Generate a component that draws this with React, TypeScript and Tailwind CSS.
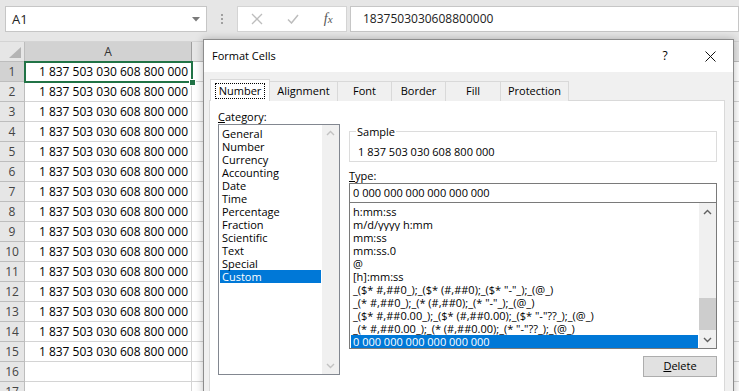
import React from 'react';

const ui = { fontFamily: '"Open Sans", "Liberation Sans", sans-serif' };

const NUM = '1 837 503 030 608 800 000';

const categories = [
  'General',
  'Number',
  'Currency',
  'Accounting',
  'Date',
  'Time',
  'Percentage',
  'Fraction',
  'Scientific',
  'Text',
  'Special',
  'Custom',
];

const types = [
  'h:mm:ss',
  'm/d/yyyy h:mm',
  'mm:ss',
  'mm:ss.0',
  '@',
  '[h]:mm:ss',
  '_($* #,##0_);_($* (#,##0);_($* "-"_);_(@_)',
  '_(* #,##0_);_(* (#,##0);_(* "-"_);_(@_)',
  '_($* #,##0.00_);_($* (#,##0.00);_($* "-"??_);_(@_)',
  '_(* #,##0.00_);_(* (#,##0.00);_(* "-"??_);_(@_)',
  '0 000 000 000 000 000 000',
];

const tabs = [
  { name: 'Number', w: 'w-[60px]' },
  { name: 'Alignment', w: 'w-[69px]' },
  { name: 'Font', w: 'w-[55px]' },
  { name: 'Border', w: 'w-[55px]' },
  { name: 'Fill', w: 'w-[56px]' },
  { name: 'Protection', w: 'w-[69px]' },
];

const Chevron = ({ up, color }: { up?: boolean; color: string }) => (
  <svg width="9" height="6" viewBox="0 0 9 6">
    <path d={up ? 'M1 5L4.5 1.5L8 5' : 'M1 1L4.5 4.5L8 1'} fill="none" stroke={color} strokeWidth="1.4" />
  </svg>
);

const rows = Array.from({ length: 17 }, (_, i) => i + 1);

const App = () => {
  return (
    <div className="relative w-[739px] h-[391px] overflow-hidden bg-white text-black" style={ui}>
      {/* formula bar */}
      <div className="h-[41px] bg-[#e6e6e6] flex items-start pt-[6px] pl-[5px]">
        <div className="w-[202px] h-[26px] bg-white border border-[#c6c6c6] flex items-center justify-between pl-[6px] pr-[6px]">
          <span className="text-[13px] text-[#222] leading-none">A1</span>
          <svg width="8" height="5" viewBox="0 0 8 5">
            <path d="M0 0H8L4 4.5Z" fill="#7a7a7a" />
          </svg>
        </div>
        <div className="w-[30px] h-[26px] flex flex-col items-center justify-center gap-[2px]">
          <div className="w-[2px] h-[2px] bg-[#a0a0a0]" />
          <div className="w-[2px] h-[2px] bg-[#a0a0a0]" />
          <div className="w-[2px] h-[2px] bg-[#a0a0a0]" />
        </div>
        <div className="w-[110px] h-[26px] bg-white border border-[#d4d4d4] flex items-center">
          <div className="w-[36px] flex justify-center ml-[1px]">
            <svg width="12" height="12" viewBox="0 0 12 12">
              <path d="M1 1L11 11M11 1L1 11" stroke="#bdbdbd" strokeWidth="1.3" />
            </svg>
          </div>
          <div className="w-[36px] flex justify-center">
            <svg width="12" height="10" viewBox="0 0 12 10">
              <path d="M1 5.5L4.5 9L11 1" fill="none" stroke="#bdbdbd" strokeWidth="1.5" />
            </svg>
          </div>
          <div className="w-[36px] flex justify-center">
            <span className="italic text-[14px] text-[#555] leading-none" style={{ fontFamily: '"Liberation Serif", serif' }}>
              f<span className="text-[11px]">x</span>
            </span>
          </div>
        </div>
        <div className="flex-1 h-[26px] bg-white border border-[#c6c6c6] ml-[3px] pl-[12px] flex items-center">
          <span className="text-[12px] text-[#222]">1837503030608800000</span>
        </div>
      </div>

      {/* column header */}
      <div className="flex h-[21px] border-t border-[#d4d4d4] bg-[#e6e6e6]">
        <div className="w-[25px] border-r border-b border-[#bdbdbd] relative">
          <svg className="absolute left-[9px] top-[5px]" width="12" height="11" viewBox="0 0 12 11">
            <path d="M12 0V11H0Z" fill="#b4b4b4" />
          </svg>
        </div>
        <div className="w-[167px] bg-[#d2d2d2] border-r border-b border-[#9e9e9e] flex items-center justify-center text-[12px] text-[#333]">
          A
        </div>
        <div className="flex-1 border-b border-[#bdbdbd]" />
      </div>

      {/* rows */}
      {rows.map((r) => (
        <div key={r} className="flex h-[20px]">
          <div
            className={`w-[25px] border-r border-b border-[#bdbdbd] flex items-center justify-center text-[12px] text-[#444] ${
              r === 1 ? 'bg-[#d2d2d2]' : 'bg-[#e6e6e6]'
            }`}
          >
            {r}
          </div>
          <div className="w-[167px] border-r border-b border-[#d4d4d4] flex items-center justify-end pr-[3px] text-[12px]">
            {r <= 15 ? NUM : ''}
          </div>
          <div className="flex-1 border-b border-[#d4d4d4]" />
        </div>
      ))}

      {/* selection A1 */}
      <div className="absolute left-[24px] top-[61px] w-[169px] h-[22px] border-2 border-[#217346]" />
      <div className="absolute left-[189px] top-[79px] w-[7px] h-[7px] bg-[#217346] border border-white" />

      {/* dialog */}
      <div className="absolute left-[203px] top-[39px] w-[531px] h-[370px] border border-[#8c8c8c] bg-[#f0f0f0] shadow-[0_0_8px_rgba(0,0,0,0.25)] text-[11px]">
        <div className="h-[32px] bg-white flex items-center pl-[8px]">
          <span className="flex-1 text-[11px]">Format Cells</span>
          <span className="w-[20px] text-center text-[12px]">?</span>
          <div className="w-[46px] ml-[12px] flex justify-center">
            <svg width="11" height="11" viewBox="0 0 11 11">
              <path d="M0.5 0.5L10.5 10.5M10.5 0.5L0.5 10.5" stroke="#111" strokeWidth="1" />
            </svg>
          </div>
        </div>

        <div className="pt-[7px] pl-[5px]">
          {/* tabs */}
          <div className="flex items-end h-[22px] pl-[1px] relative z-10">
            {tabs.map((t, i) =>
              i === 0 ? (
                <div
                  key={t.name}
                  className={`${t.w} h-[22px] bg-white border border-b-0 border-[#d9d9d9] flex items-center justify-center`}
                >
                  <span className="border border-dotted border-black px-[3px] leading-[14px]">{t.name}</span>
                </div>
              ) : (
                <div
                  key={t.name}
                  className={`${t.w} h-[20px] -ml-px bg-[#f0f0f0] border border-b-0 border-[#d9d9d9] flex items-center justify-center`}
                >
                  {t.name}
                </div>
              )
            )}
          </div>

          {/* panel */}
          <div className="w-[516px] h-[320px] -mt-px bg-white border border-[#d9d9d9] flex pl-[8px] pt-[8px]">
            {/* category */}
            <div className="w-[122px]">
              <div className="leading-[15px]">
                <span className="underline">C</span>ategory:
              </div>
              <div className="h-[251px] border border-[#828790] flex">
                <div className="flex-1 pt-[2px]">
                  {categories.map((c) => (
                    <div
                      key={c}
                      className={`leading-[13px] mx-px px-[2px] ${c === 'Custom' ? 'bg-[#0078d7] text-white' : ''}`}
                    >
                      {c}
                    </div>
                  ))}
                </div>
                <div className="w-[17px] bg-[#f0f0f0] flex flex-col justify-between items-center py-[5px]">
                  <Chevron up color="#c2c2c2" />
                  <Chevron color="#c2c2c2" />
                </div>
              </div>
            </div>

            {/* right side */}
            <div className="w-[368px] ml-[9px] mt-[15px] flex flex-col">
              <fieldset className="border border-[#dcdcdc] pl-[6px] pb-[2px]">
                <legend className="px-px leading-[15px]">Sample</legend>
                <div className="pl-[2px] mt-[5px] leading-[15px]">{NUM}</div>
              </fieldset>
              <div className="mt-[6px] leading-[15px]">
                <span className="underline">T</span>ype:
              </div>
              <div className="h-[20px] border border-[#7a7a7a] pl-[3px] leading-[18px]">0 000 000 000 000 000 000</div>
              <div className="h-[147px] -mt-px border border-[#7a7a7a] flex">
                <div className="flex-1 pt-[2px] overflow-hidden">
                  {types.map((t, i) => (
                    <div
                      key={i}
                      className={`h-[13px] leading-[13px] mx-px px-[2px] whitespace-pre overflow-hidden ${
                        i === types.length - 1 ? 'bg-[#0078d7] text-white' : ''
                      }`}
                    >
                      {t}
                    </div>
                  ))}
                </div>
                <div className="w-[17px] bg-[#f0f0f0] flex flex-col items-center">
                  <div className="h-[17px] flex items-center justify-center">
                    <Chevron up color="#606060" />
                  </div>
                  <div className="flex-1 w-full pt-[78px]">
                    <div className="h-[32px] w-full bg-[#cdcdcd]" />
                  </div>
                  <div className="h-[17px] flex items-center justify-center">
                    <Chevron color="#606060" />
                  </div>
                </div>
              </div>
              <div className="self-end mt-[7px] w-[74px] h-[21px] bg-[#e1e1e1] border border-[#adadad] flex items-center justify-center">
                <span>
                  <span className="underline">D</span>elete
                </span>
              </div>
            </div>
          </div>
        </div>
      </div>
    </div>
  );
};

export default App;
